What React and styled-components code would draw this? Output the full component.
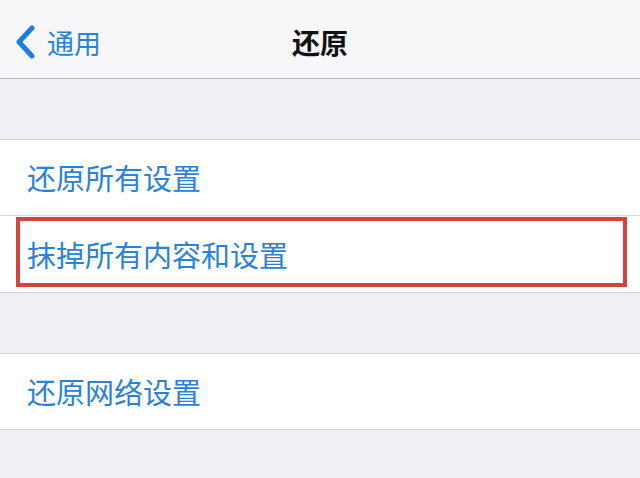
import React from 'react';
import styled, { createGlobalStyle } from 'styled-components';

const GlobalStyle = createGlobalStyle`
  html, body {
    margin: 0;
    padding: 0;
    background: #efeff4;
  }
  body {
    font-family: "Noto Sans CJK SC", "Noto Sans", sans-serif;
  }
`;

const Screen = styled.div`
  width: 640px;
  min-height: 478px;
  background: #efeff4;
`;

const NavBar = styled.div`
  height: 79px;
  padding-top: 6px;
  box-sizing: border-box;
  background: #f7f7f9;
  border-bottom: 1px solid #b9b9bd;
  display: grid;
  grid-template-columns: 1fr auto 1fr;
  align-items: center;
`;

const BackButton = styled.div`
  display: flex;
  align-items: center;
  gap: 11px;
  padding-left: 14px;
  color: #2a82d8;
  font-size: 27px;
  line-height: 1;
`;

const Title = styled.div`
  font-size: 28px;
  font-weight: 700;
  color: #111;
  line-height: 1;
`;

const Spacer = styled.div`
  height: 60px;
`;

const Group = styled.div`
  background: #fff;
  border-top: 1px solid #d3d3d7;
  border-bottom: 1px solid #d3d3d7;
`;

const Row = styled.div`
  position: relative;
  height: ${(p) => p.$height || 75}px;
  display: flex;
  align-items: center;
  padding-left: 27px;
  font-size: 29px;
  color: #2a82d8;
  line-height: 1;
  & + & {
    border-top: 1px solid #d8d8dc;
  }
`;

const Highlight = styled.div`
  position: absolute;
  left: 16px;
  top: 1px;
  width: 611px;
  height: 70px;
  box-sizing: border-box;
  border: 4px solid #d4443a;
  pointer-events: none;
`;

const Chevron = () => (
  <svg width="22" height="34" viewBox="0 0 22 34">
    <polyline
      points="18,3 5,17 18,31"
      fill="none"
      stroke="#1a7ee0"
      strokeWidth="5"
      strokeLinecap="round"
      strokeLinejoin="round"
    />
  </svg>
);

const App = () => {
  return (
    <Screen>
      <GlobalStyle />
      <NavBar>
        <BackButton>
          <Chevron />
          <span>通用</span>
        </BackButton>
        <Title>还原</Title>
        <div />
      </NavBar>
      <Spacer />
      <Group>
        <Row>还原所有设置</Row>
        <Row $height={76}>
          抹掉所有内容和设置
          <Highlight />
        </Row>
      </Group>
      <Spacer />
      <Group>
        <Row>还原网络设置</Row>
      </Group>
    </Screen>
  );
};

export default App;
